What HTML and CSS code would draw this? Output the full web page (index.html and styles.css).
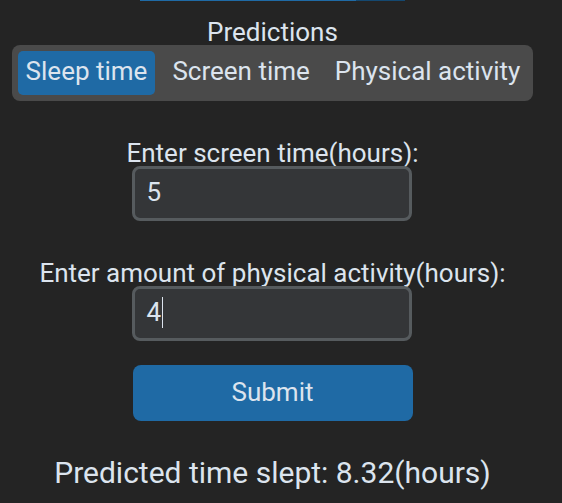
FILE: index.html
```html
<!DOCTYPE html>
<html>
<head>
<meta charset="utf-8">
<link rel="stylesheet" href="styles.css">
</head>
<body>
<div class="app">
  <div class="topbar"><div class="seg-a"></div><div class="seg-b"></div></div>
  <div class="title">Predictions</div>
  <div class="tabs">
    <div class="tab active">Sleep time</div>
    <div class="tab">Screen time</div>
    <div class="tab">Physical activity</div>
  </div>
  <div class="field first">
    <div class="label">Enter screen time(hours):</div>
    <div class="entry">5</div>
  </div>
  <div class="field second">
    <div class="label">Enter amount of physical activity(hours):</div>
    <div class="entry">4<span class="caret"></span></div>
  </div>
  <div class="submit">Submit</div>
  <div class="result">Predicted time slept: 8.32(hours)</div>
</div>
</body>
</html>
```
FILE: styles.css
```css
html, body {
  margin: 0;
  padding: 0;
  background: #242424;
  width: 562px;
  height: 503px;
  overflow: hidden;
}
.app {
  width: 545px;
  display: flex;
  flex-direction: column;
  align-items: center;
  font-family: Roboto, "Noto Sans", sans-serif;
  color: #dce4ee;
}
.topbar {
  display: flex;
  height: 1px;
  width: 265px;
}
.seg-a { width: 216px; background: #1f6aa5; }
.seg-b { width: 49px; background: #144870; }
.title {
  margin-top: 19px;
  font-size: 26px;
  line-height: 25px;
}
.tabs {
  display: flex;
  gap: 9px;
  background: #4a4a4a;
  border-radius: 8px;
  padding: 6px 5px 6px 6px;
}
.tab {
  font-size: 26px;
  line-height: 40px;
  height: 40px;
  padding: 0 8px 4px;
  border-radius: 5px;
}
.tab.active { background: #1f6aa5; }
.field {
  display: flex;
  flex-direction: column;
  align-items: center;
  margin-top: 39px;
}
.label {
  font-size: 26px;
  line-height: 26px;
}
.entry {
  height: 47px;
  padding-bottom: 2px;
  border: 3px solid #565b5e;
  border-radius: 8px;
  background: #343638;
  font-size: 26px;
  line-height: 47px;
  padding-left: 11px;
  box-sizing: content-box;
  width: 263px;
  display: flex;
  align-items: center;
}
.caret {
  display: inline-block;
  width: 1px;
  height: 31px;
  background: #dce4ee;
  margin-left: 1px;
}
.submit {
  margin-top: 24px;
  width: 280px;
  height: 56px;
  border-radius: 8px;
  background: #1f6aa5;
  font-size: 26px;
  line-height: 54px;
  text-align: center;
}
.result {
  margin-top: 34px;
  font-size: 30px;
  line-height: 36px;
}
```
